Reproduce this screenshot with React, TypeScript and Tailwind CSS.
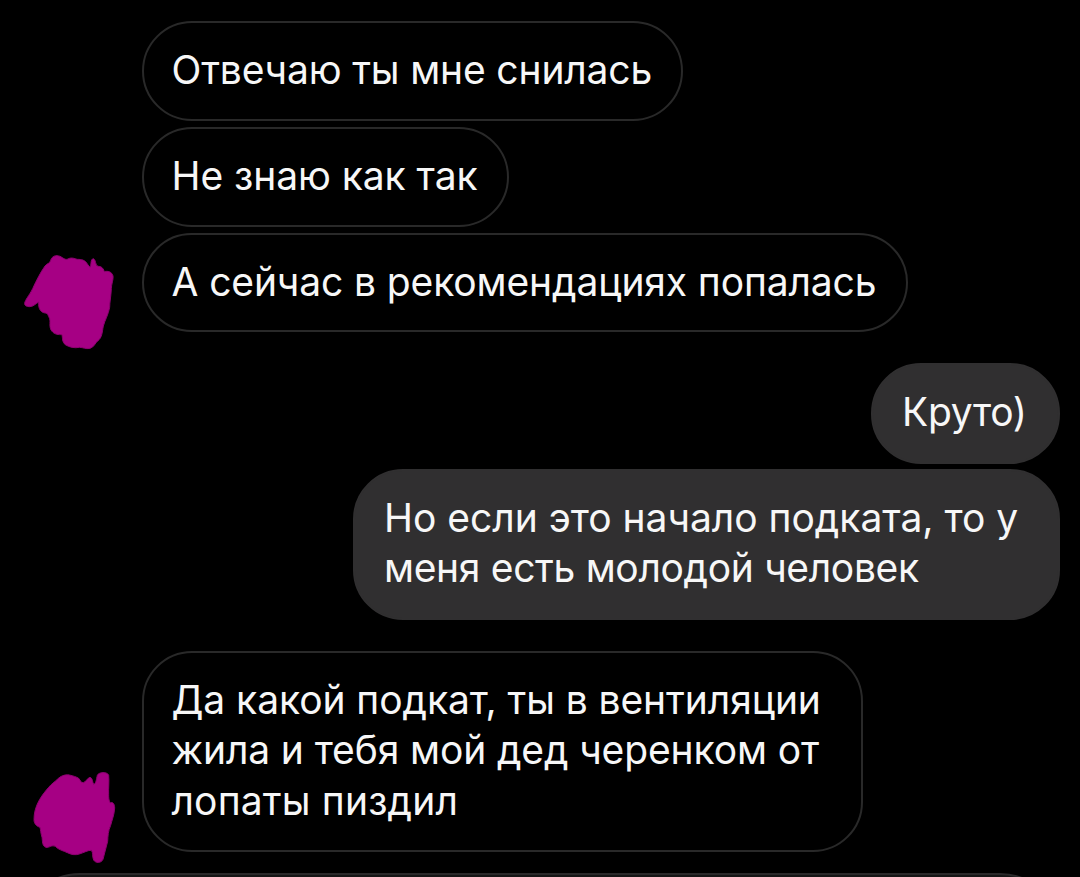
import React from 'react';
import clsx from 'clsx';

interface Line {
  text: string;
  tracking?: string;
}

interface BubbleProps {
  lines: Line[];
  mine?: boolean;
  className?: string;
}

const Bubble: React.FC<BubbleProps> = ({ lines, mine, className }) => (
  <div
    className={clsx(
      'rounded-[50px] border-2 pt-[22px] text-[39px] leading-[50.4px] whitespace-nowrap text-[#f7f7f7]',
      mine ? 'border-[#302f30] bg-[#302f30] pl-[29px]' : 'border-[#292929] bg-black pl-[27.5px]',
      className
    )}
  >
    {lines.map((line) => (
      <p key={line.text} className={line.tracking}>
        {line.text}
      </p>
    ))}
  </div>
);

/** Brush scribble painted over the sender's avatar */
const Scribble: React.FC<{ d: string; className: string }> = ({ d, className }) => (
  <svg viewBox="0 0 360 360" className={clsx('h-[120px] w-[120px] shrink-0', className)}>
    <path d={d} fill="#a60084" stroke="#8d0070" strokeWidth="3" strokeLinejoin="round" />
  </svg>
);

const SCRIBBLE_TOP =
  'M44 190C45 180 58 166 68 146C78 124 92 96 105 78C112 70 120 70 122 61C126 48 138 44 150 49C160 54 166 61 174 57C184 51 194 56 202 58C214 58 226 60 232 72L240 82C245 76 240 58 250 56C258 58 255 76 264 79C272 79 279 82 283 95C292 92 306 95 309 108C311 118 304 132 304 146C303 170 299 186 299 202C295 224 285 240 280 258C276 280 276 292 264 302C256 308 252 322 240 325C226 328 220 322 208 322C194 325 178 322 166 314C156 306 158 294 156 284C146 284 134 284 126 274C116 262 122 248 119 236C114 226 114 220 106 219C94 218 84 208 86 186C76 192 68 201 58 200C49 200 43 196 44 190Z';

const SCRIBBLE_BOTTOM =
  'M42 179C42 160 46 146 52 132C60 114 72 98 86 82C94 72 104 66 112 58C122 48 134 43 148 45C160 48 168 50 176 55C182 62 182 68 190 68C198 66 202 54 210 52C218 54 217 66 221 73C228 72 229 58 232 46C236 36 262 34 266 46C268 66 265 84 266 104C266 112 266 122 271 129C278 124 284 132 284 144C283 164 276 180 272 196C264 214 264 228 263 244C258 262 254 280 249 298C244 310 226 310 221 300C216 290 220 278 214 271C204 270 192 278 178 282C166 286 154 284 142 278C130 272 116 270 106 259C94 254 88 264 78 262C66 258 68 244 66 232C62 218 62 210 60 202C48 198 42 190 42 179Z';

export default function App() {
  return (
    <div className="flex h-[877px] w-[1080px] flex-col overflow-hidden bg-black pt-[21px] font-['Inter',sans-serif]">
      {/* Incoming group */}
      <div className="flex items-end">
        <div className="flex w-[142px] shrink-0 pl-2.5">
          <Scribble d={SCRIBBLE_TOP} className="-mb-[28px]" />
        </div>
        <div className="flex flex-col items-start gap-1.5">
          <Bubble className="h-[100px] w-[541px]" lines={[{ text: 'Отвечаю ты мне снилась', tracking: 'tracking-[-0.16px]' }]} />
          <Bubble className="h-[100px] w-[367px]" lines={[{ text: 'Не знаю как так', tracking: 'tracking-[-0.07px]' }]} />
          <Bubble
            className="h-[99px] w-[766px]"
            lines={[{ text: 'А сейчас в рекомендациях попалась', tracking: 'tracking-[-0.12px]' }]}
          />
        </div>
      </div>

      {/* Outgoing group */}
      <div className="mt-[31px] flex flex-col items-end gap-[5px] pr-5">
        <Bubble mine className="h-[101px] w-[189px]" lines={[{ text: 'Круто)', tracking: 'tracking-[-0.3px]' }]} />
        <Bubble
          mine
          className="h-[151px] w-[707px]"
          lines={[
            { text: 'Но если это начало подката, то у', tracking: 'tracking-[-0.02px]' },
            { text: 'меня есть молодой человек', tracking: 'tracking-[-0.33px]' },
          ]}
        />
      </div>

      {/* Incoming reply */}
      <div className="mt-[31px] flex items-end">
        <div className="flex w-[142px] shrink-0 pl-5">
          <Scribble d={SCRIBBLE_BOTTOM} className="-mb-[28px]" />
        </div>
        <Bubble
          className="h-[201px] w-[721px]"
          lines={[
            { text: 'Да какой подкат, ты в вентиляции', tracking: 'tracking-[-0.08px]' },
            { text: 'жила и тебя мой дед черенком от', tracking: 'tracking-[-0.12px]' },
            { text: 'лопаты пиздил', tracking: 'tracking-[0.17px]' },
          ]}
        />
      </div>

      {/* Composer, cut off by the bottom edge */}
      <div className="mx-5 mt-[21px] h-[130px] shrink-0 rounded-[60px] border-2 border-[#2a292a] bg-[#161616]" />
    </div>
  );
}
